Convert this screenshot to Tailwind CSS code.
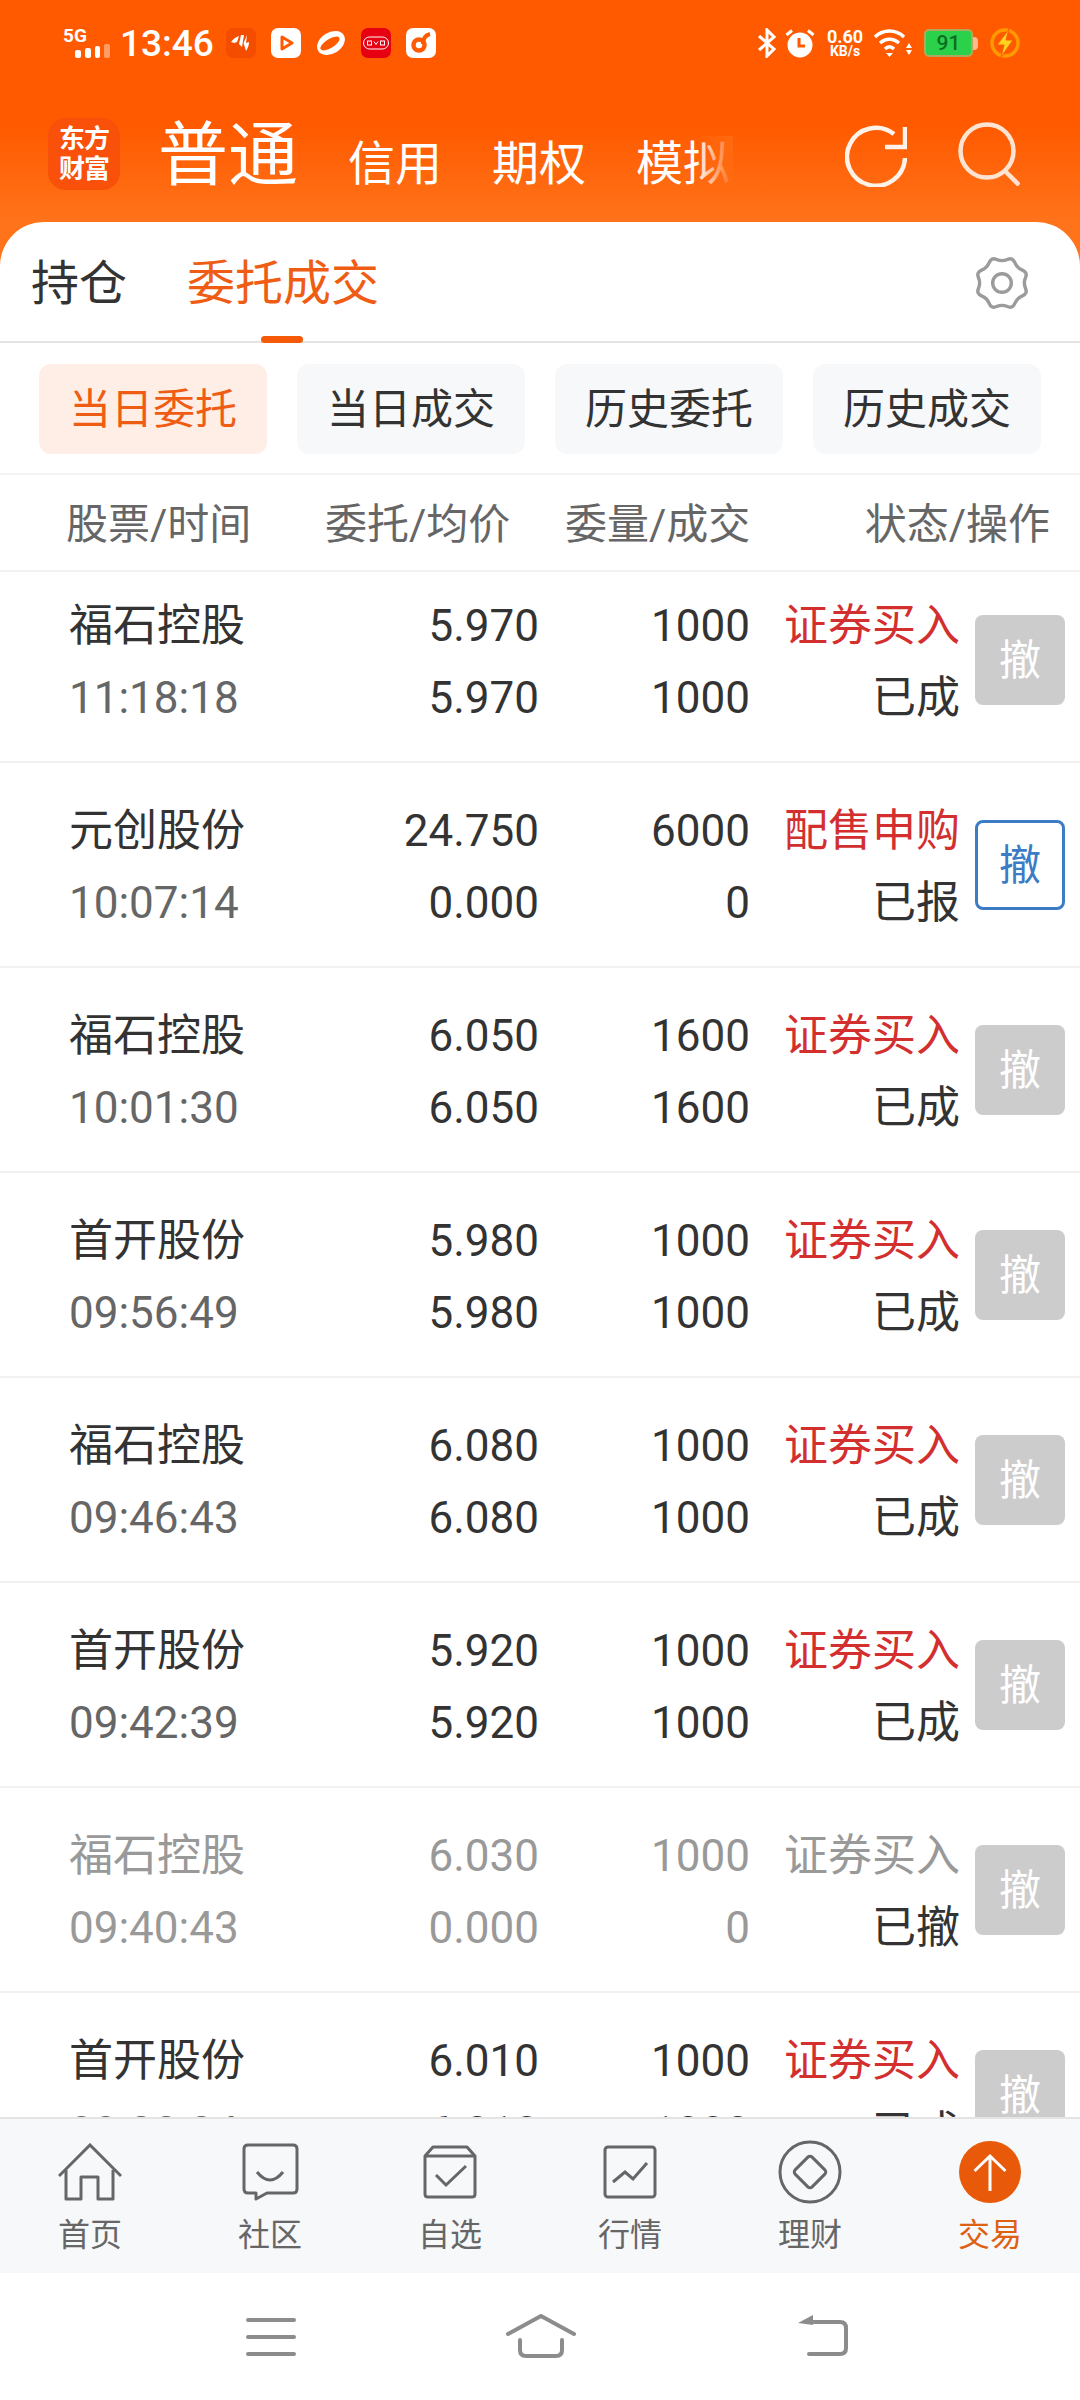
<!DOCTYPE html>
<html><head><meta charset="utf-8">
<script src="https://cdn.jsdelivr.net/npm/@tailwindcss/browser@4"></script>
</head>
<body class="bg-white">
<div class="relative w-[1080px] h-[2400px] overflow-hidden flex flex-col bg-white font-['Roboto','Noto_Sans_CJK_SC',sans-serif] text-[#333]">
  <div class="absolute left-0 top-0 w-full h-[300px] bg-[linear-gradient(180deg,#ff5a00_0px,#ff5a00_125px,#ff731a_222px)]"></div>

  <!-- status bar -->
  <div class="relative h-[86px] shrink-0 flex items-center justify-between pl-[63px] pr-[60px] text-white">
    <div class="flex items-center">
      <div class="w-[47px] h-[29px] flex flex-col">
        <span class="text-[19px] font-bold leading-[14px] h-[15px]">5G</span>
        <div class="ml-[12px] h-[14px] flex items-end gap-[4px]">
          <i class="block w-[6px] h-[8px] bg-white rounded-[2px]"></i><i class="block w-[6px] h-[10px] bg-white rounded-[2px]"></i><i class="block w-[6px] h-[12px] bg-white rounded-[2px]"></i><i class="block w-[6px] h-[14px] bg-white/40 rounded-[2px]"></i>
        </div>
      </div>
      <span class="ml-[10px] w-[106px] text-[37px] font-medium leading-none">13:46</span>
      <div class="flex items-center gap-[15px]">
        <div class="w-[30px] h-[30px] rounded-[7px] bg-[#f44d00] flex items-center justify-center">
          <svg width="22" height="22" viewBox="0 0 22 22" fill="#fff"><path d="M1 10C3 7 6 5 9 4L7 10 4 11zM11 3 9 12 12 15 13 9 14 3zM17 3 13.500 11 16 19C18 16 19 13 19 10L16 11z"/></svg>
        </div>
        <div class="w-[30px] h-[30px] rounded-[7px] bg-white flex items-center justify-center">
          <svg width="20" height="20" viewBox="0 0 20 20" fill="none" stroke="#ff5a00" stroke-width="3" stroke-linejoin="round"><path d="M6 4 16 10 6 16z"/></svg>
        </div>
        <svg width="30" height="30" viewBox="0 0 30 30"><ellipse cx="15" cy="15" rx="15" ry="10.500" transform="rotate(-32 15 15)" fill="#fff"/><ellipse cx="14" cy="15.500" rx="11" ry="4.500" transform="rotate(-32 14 15.500)" fill="#ff5a00"/></svg>
        <div class="w-[30px] h-[30px] rounded-[7px] bg-[#e60012] flex items-center justify-center">
          <svg width="26" height="14" viewBox="0 0 26 14" fill="none" stroke="#fff" stroke-width="1"><rect x="0.500" y="1" width="25" height="12" rx="6"/><rect x="4.500" y="5" width="4" height="4"/><rect x="17.500" y="5" width="4" height="4"/><path d="M11 5.500 13 8.500 15 5.500"/></svg>
        </div>
        <div class="w-[30px] h-[30px] rounded-[7px] bg-white flex items-center justify-center">
          <svg width="24" height="24" viewBox="0 0 24 24" fill="none" stroke="#ff5a00"><circle cx="10" cy="14" r="5.500" stroke-width="4.500"/><path d="M14 13C14 7 17 4 21 3" stroke-width="4"/></svg>
        </div>
      </div>
    </div>
    <div class="flex items-center">
      <svg width="19" height="30" viewBox="0 0 19 30" fill="none" stroke="#fff" stroke-width="3"><path d="M1 8 16 21 9 28V2L16 9 1 22"/></svg>
      <svg class="ml-[8px]" width="30" height="30" viewBox="0 0 30 30"><circle cx="15" cy="17" r="12.500" fill="#fff"/><path d="M14 10V18H20" fill="none" stroke="#ff5a00" stroke-width="3"/><path d="M1.500 7 7 2.500M28.500 7 23 2.500" stroke="#fff" stroke-width="3"/></svg>
      <div class="ml-[12px] w-[36px] flex flex-col items-center font-bold leading-none">
        <span class="text-[18px] leading-[17px]">0.60</span><span class="text-[14px] leading-[13px]">KB/s</span>
      </div>
      <svg class="ml-[11px]" width="39" height="28" viewBox="0 0 39 28" fill="none" stroke="#fff" stroke-width="3.400"><path d="M1 8C9 0 22 0 30 8M6 14C12 9 19 9 25 14M11 20C14 17 17 17 20 20"/><path d="M12 24 15.500 28 19 24z" fill="#fff" stroke="none"/><path d="M32 19 35 14 38 19zM32 21 38 21 35 26z" fill="#fff" stroke="none"/></svg>
      <div class="ml-[11px] w-[49px] h-[28px] rounded-[5px] bg-[#2bd14b] border-[2px] border-[#b0a85a] flex items-center justify-center text-[21px] font-medium leading-none text-[#0b6e22]">91</div>
      <div class="w-[5px] h-[13px] rounded-r-[4px] bg-[#ffb98c]"></div>
      <svg class="ml-[12px]" width="30" height="30" viewBox="0 0 30 30"><circle cx="15" cy="15" r="13" fill="none" stroke="#ff9a00" stroke-width="3.500"/><path d="M19 1 7 17H14L11 29 23 12H16z" fill="#ffd21f" stroke="#ff5a00" stroke-width="1"/></svg>
    </div>
  </div>

  <!-- top nav -->
  <div class="relative h-[136px] shrink-0 pl-[48px] flex items-start text-white">
    <div class="mt-[32px] w-[72px] h-[72px] rounded-[18px] bg-[#f9500a] flex flex-col items-center justify-center text-[26px] font-bold leading-[30px] tracking-[-1px]">
      <span>东方</span><span>财富</span>
    </div>
    <span class="ml-[38px] mt-[30px] w-[144px] text-[70px] leading-[80px]">普通</span>
    <span class="ml-[46px] mt-[50px] w-[94px] text-[47px] leading-[56px]">信用</span>
    <span class="ml-[50px] mt-[50px] w-[94px] text-[47px] leading-[56px]">期权</span>
    <div class="ml-[50px] mt-[50px] w-[97px] overflow-hidden relative h-[56px]">
      <span class="text-[47px] leading-[56px] whitespace-nowrap">模拟</span>
      <div class="absolute right-0 top-0 h-full w-[38px] bg-[linear-gradient(90deg,#ff6a1000,#ff6a10)]"></div>
    </div>
    <svg class="absolute left-[845px] top-[39px]" width="62" height="62" viewBox="0 0 62 62" fill="none" stroke="#fff2e8" stroke-width="4.500"><path d="M60 33A29 29 0 1 1 49 9"/><path d="M60 2V22H40" stroke-linecap="butt"/></svg>
    <svg class="absolute left-[958px] top-[36px]" width="62" height="64" viewBox="0 0 62 64" fill="none" stroke="#ffe3d2" stroke-width="4.500"><circle cx="29" cy="29" r="26.500"/><path d="M47 49 61 63"/></svg>
  </div>

  <!-- sheet -->
  <div class="relative flex-1 min-h-0 flex flex-col bg-white rounded-t-[44px]">
    <div class="relative h-[121px] shrink-0 border-b-[2px] border-[#e4e4e4] flex items-start pl-[31px]">
      <span class="mt-[32px] w-[96px] text-[48px] leading-[60px] text-[#333]">持仓</span>
      <span class="ml-[60px] mt-[32px] text-[48px] leading-[60px] text-[#ef5d14]">委托成交</span>
      <div class="absolute left-[261px] bottom-[-2px] w-[42px] h-[7px] rounded-full bg-[#f55a09]"></div>
      <svg class="absolute left-[973px] top-[32px]" width="58" height="58" viewBox="-28 -28 56 56" fill="none" stroke="#9b9b9b" stroke-width="3.300"><path d="M22.700 -5.150Q20.500 0 22.700 5.150Q24.900 10.300 19.700 12.400Q14.500 14.500 12.400 19.700Q10.300 24.900 5.150 22.700Q0 20.500 -5.150 22.700Q-10.300 24.900 -12.400 19.700Q-14.500 14.500 -19.700 12.400Q-24.900 10.300 -22.700 5.150Q-20.500 0 -22.700 -5.150Q-24.900 -10.300 -19.700 -12.400Q-14.500 -14.500 -12.400 -19.700Q-10.300 -24.900 -5.150 -22.700Q0 -20.500 5.150 -22.700Q10.300 -24.900 12.400 -19.700Q14.500 -14.500 19.700 -12.400Q24.900 -10.300 22.700 -5.150Z"/><circle r="9"/></svg>
    </div>
    <div class="h-[132px] shrink-0 border-b-[2px] border-[#f3f3f3] flex items-start pl-[39px] pt-[21px] gap-[30px] text-[42px]">
      <div class="w-[228px] h-[90px] rounded-[12px] bg-[#feeee6] text-[#ef5d14] flex items-center justify-center">当日委托</div>
      <div class="w-[228px] h-[90px] rounded-[12px] bg-[#f7f8fa] flex items-center justify-center">当日成交</div>
      <div class="w-[228px] h-[90px] rounded-[12px] bg-[#f7f8fa] flex items-center justify-center">历史委托</div>
      <div class="w-[228px] h-[90px] rounded-[12px] bg-[#f7f8fa] flex items-center justify-center">历史成交</div>
    </div>
    <div class="h-[97px] shrink-0 border-b-[2px] border-[#f1f1f1] flex items-center pl-[66px] pr-[30px] pt-[3px] text-[42px] text-[#666]">
      <span class="w-[259px]">股票/时间</span>
      <span class="w-[240px]">委托/均价</span>
      <span class="flex-1">委量/成交</span>
      <span>状态/操作</span>
    </div>

    <!-- rows -->
    <div class="flex-1 min-h-0 overflow-hidden text-[44px] leading-[72px]">

      <div class="h-[191px] pt-[18px] border-b-[2px] border-[#f1f1f1] flex items-start">
        <div class="ml-[69px] w-[300px]"><div>福石控股</div><div class="text-[#666]">11:18:18</div></div>
        <div class="w-[170px] text-right"><div>5.970</div><div>5.970</div></div>
        <div class="w-[211px] text-right"><div>1000</div><div>1000</div></div>
        <div class="w-[210px] text-right"><div class="text-[#d32f2f]">证券买入</div><div>已成</div></div>
        <div class="ml-[15px] mt-[25px] w-[90px] h-[90px] pt-[2px] rounded-[8px] bg-[#cccccc] text-white text-[42px] flex items-center justify-center">撤</div>
      </div>

      <div class="h-[205px] pt-[32px] border-b-[2px] border-[#f1f1f1] flex items-start">
        <div class="ml-[69px] w-[300px]"><div>元创股份</div><div class="text-[#666]">10:07:14</div></div>
        <div class="w-[170px] text-right"><div>24.750</div><div>0.000</div></div>
        <div class="w-[211px] text-right"><div>6000</div><div>0</div></div>
        <div class="w-[210px] text-right"><div class="text-[#d32f2f]">配售申购</div><div>已报</div></div>
        <div class="ml-[15px] mt-[25px] w-[90px] h-[90px] pt-[2px] rounded-[8px] border-[3px] border-[#3b7cc4] text-[#3b7cc4] text-[42px] flex items-center justify-center">撤</div>
      </div>

      <div class="h-[205px] pt-[32px] border-b-[2px] border-[#f1f1f1] flex items-start">
        <div class="ml-[69px] w-[300px]"><div>福石控股</div><div class="text-[#666]">10:01:30</div></div>
        <div class="w-[170px] text-right"><div>6.050</div><div>6.050</div></div>
        <div class="w-[211px] text-right"><div>1600</div><div>1600</div></div>
        <div class="w-[210px] text-right"><div class="text-[#d32f2f]">证券买入</div><div>已成</div></div>
        <div class="ml-[15px] mt-[25px] w-[90px] h-[90px] pt-[2px] rounded-[8px] bg-[#cccccc] text-white text-[42px] flex items-center justify-center">撤</div>
      </div>

      <div class="h-[205px] pt-[32px] border-b-[2px] border-[#f1f1f1] flex items-start">
        <div class="ml-[69px] w-[300px]"><div>首开股份</div><div class="text-[#666]">09:56:49</div></div>
        <div class="w-[170px] text-right"><div>5.980</div><div>5.980</div></div>
        <div class="w-[211px] text-right"><div>1000</div><div>1000</div></div>
        <div class="w-[210px] text-right"><div class="text-[#d32f2f]">证券买入</div><div>已成</div></div>
        <div class="ml-[15px] mt-[25px] w-[90px] h-[90px] pt-[2px] rounded-[8px] bg-[#cccccc] text-white text-[42px] flex items-center justify-center">撤</div>
      </div>

      <div class="h-[205px] pt-[32px] border-b-[2px] border-[#f1f1f1] flex items-start">
        <div class="ml-[69px] w-[300px]"><div>福石控股</div><div class="text-[#666]">09:46:43</div></div>
        <div class="w-[170px] text-right"><div>6.080</div><div>6.080</div></div>
        <div class="w-[211px] text-right"><div>1000</div><div>1000</div></div>
        <div class="w-[210px] text-right"><div class="text-[#d32f2f]">证券买入</div><div>已成</div></div>
        <div class="ml-[15px] mt-[25px] w-[90px] h-[90px] pt-[2px] rounded-[8px] bg-[#cccccc] text-white text-[42px] flex items-center justify-center">撤</div>
      </div>

      <div class="h-[205px] pt-[32px] border-b-[2px] border-[#f1f1f1] flex items-start">
        <div class="ml-[69px] w-[300px]"><div>首开股份</div><div class="text-[#666]">09:42:39</div></div>
        <div class="w-[170px] text-right"><div>5.920</div><div>5.920</div></div>
        <div class="w-[211px] text-right"><div>1000</div><div>1000</div></div>
        <div class="w-[210px] text-right"><div class="text-[#d32f2f]">证券买入</div><div>已成</div></div>
        <div class="ml-[15px] mt-[25px] w-[90px] h-[90px] pt-[2px] rounded-[8px] bg-[#cccccc] text-white text-[42px] flex items-center justify-center">撤</div>
      </div>

      <div class="h-[205px] pt-[32px] border-b-[2px] border-[#f1f1f1] flex items-start">
        <div class="ml-[69px] w-[300px] text-[#999]"><div>福石控股</div><div>09:40:43</div></div>
        <div class="w-[170px] text-right text-[#999]"><div>6.030</div><div>0.000</div></div>
        <div class="w-[211px] text-right text-[#999]"><div>1000</div><div>0</div></div>
        <div class="w-[210px] text-right"><div class="text-[#999]">证券买入</div><div>已撤</div></div>
        <div class="ml-[15px] mt-[25px] w-[90px] h-[90px] pt-[2px] rounded-[8px] bg-[#cccccc] text-white text-[42px] flex items-center justify-center">撤</div>
      </div>

      <div class="h-[205px] pt-[32px] border-b-[2px] border-[#f1f1f1] flex items-start">
        <div class="ml-[69px] w-[300px]"><div>首开股份</div><div class="text-[#666]">09:38:34</div></div>
        <div class="w-[170px] text-right"><div>6.010</div><div>6.010</div></div>
        <div class="w-[211px] text-right"><div>1000</div><div>1000</div></div>
        <div class="w-[210px] text-right"><div class="text-[#d32f2f]">证券买入</div><div>已成</div></div>
        <div class="ml-[15px] mt-[25px] w-[90px] h-[90px] pt-[2px] rounded-[8px] bg-[#cccccc] text-white text-[42px] flex items-center justify-center">撤</div>
      </div>
    </div>

    <!-- bottom tabs -->
    <div class="h-[156px] shrink-0 border-t-[2px] border-[#e4e4e4] bg-[#f7f8fa] grid grid-cols-6 text-[32px] text-[#666] leading-[40px]">
      <div class="flex flex-col items-center pt-[21px]">
        <div class="h-[64px] flex items-center justify-center"><svg width="64" height="58" viewBox="0 0 64 58" fill="none" stroke="#666" stroke-width="3"><path d="M1 33 32 2 63 33"/><path d="M8 27V56H23V34H40V56H55V27" stroke-linejoin="round"/></svg></div>
        <span class="mt-[11px]">首页</span>
      </div>
      <div class="flex flex-col items-center pt-[21px]">
        <div class="h-[64px] flex items-center justify-center"><svg width="57" height="58" viewBox="0 0 57 58" fill="none" stroke="#666" stroke-width="3"><path d="M6 2H51Q55 2 55 6V46Q55 50 51 50H25L14 56V50H6Q2 50 2 46V6Q2 2 6 2Z" stroke-linejoin="round"/><path d="M15 29Q28 45 41 29"/></svg></div>
        <span class="mt-[11px]">社区</span>
      </div>
      <div class="flex flex-col items-center pt-[21px]">
        <div class="h-[64px] flex items-center justify-center"><svg width="54" height="54" viewBox="0 0 54 54" fill="none" stroke="#666" stroke-width="3"><path d="M2 11 10 2H44L52 11V49Q52 52 49 52H5Q2 52 2 49Z" stroke-linejoin="round"/><path d="M2 11H52M13 30 23 40 43 21"/></svg></div>
        <span class="mt-[11px]">自选</span>
      </div>
      <div class="flex flex-col items-center pt-[21px]">
        <div class="h-[64px] flex items-center justify-center"><svg width="54" height="54" viewBox="0 0 54 54" fill="none" stroke="#666" stroke-width="3"><rect x="2" y="2" width="50" height="50" rx="3"/><path d="M10 37 22 27 30 34 44 18"/></svg></div>
        <span class="mt-[11px]">行情</span>
      </div>
      <div class="flex flex-col items-center pt-[21px]">
        <div class="h-[64px] flex items-center justify-center"><svg width="64" height="64" viewBox="0 0 64 64" fill="none" stroke="#666" stroke-width="3"><circle cx="32" cy="32" r="30"/><rect x="20" y="20" width="24" height="24" rx="3" transform="rotate(45 32 32)"/></svg></div>
        <span class="mt-[11px]">理财</span>
      </div>
      <div class="flex flex-col items-center pt-[21px]">
        <div class="h-[64px] flex items-center justify-center"><svg width="62" height="62" viewBox="0 0 62 62" fill="none" stroke="#fff" stroke-width="3"><circle cx="31" cy="31" r="31" fill="#e85a0a" stroke="none"/><path d="M31 16V50M15.500 30 31 15 46.500 30"/></svg></div>
        <span class="mt-[11px] text-[#dd6014]">交易</span>
      </div>
    </div>

    <!-- system nav -->
    <div class="h-[127px] shrink-0 bg-white pt-[41px] pl-[246px] flex items-start">
      <svg width="50" height="46" viewBox="0 0 50 46" fill="none" stroke="#8c8c8c" stroke-width="4" stroke-linecap="round"><path d="M2 6H48M2 23H48M2 40H48"/></svg>
      <svg class="ml-[210px]" width="70" height="46" viewBox="0 0 70 46" fill="none" stroke="#8c8c8c" stroke-width="4" stroke-linecap="round"><path d="M2 20 35 2 68 20"/><path d="M14 26V36Q14 42 20 42H50Q56 42 56 36V26"/></svg>
      <svg class="ml-[222px]" width="50" height="46" viewBox="0 0 50 46" fill="none" stroke="#8c8c8c" stroke-width="4" stroke-linecap="round"><path d="M0 9 15 1V11Z" fill="#8c8c8c" stroke="none"/><path d="M12 8H42Q48 8 48 14V34Q48 40 42 40H11"/></svg>
    </div>
  </div>
</div>
</body></html>
